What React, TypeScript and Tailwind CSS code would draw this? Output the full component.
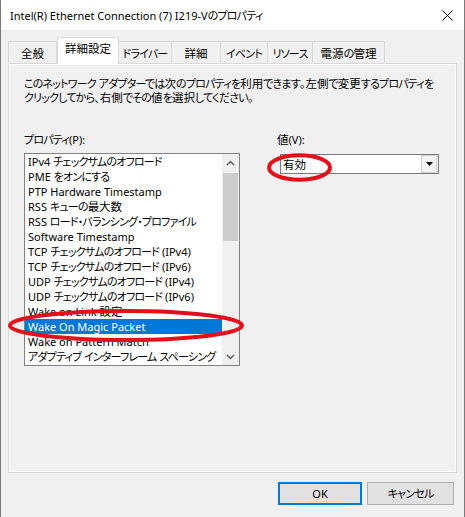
import React from "react";

function J({ t }: { t: string }) {
  const parts = t.split(/([\u3040-\u30ff]+|[\u4e00-\u9fff]+)/).filter((p) => p !== "");
  return (
    <>
      {parts.map((p, i) =>
        /[\u3040-\u30ff]/.test(p) ? (
          <span key={i} className="tracking-[-0.8px]">
            {p}
          </span>
        ) : /[\u4e00-\u9fff]/.test(p) ? (
          <span key={i} className="text-[11.5px]">
            {p}
          </span>
        ) : (
          <React.Fragment key={i}>{p}</React.Fragment>
        )
      )}
    </>
  );
}

const items = [
  "IPv4 チェックサムのオフロード",
  "PME をオンにする",
  "PTP Hardware Timestamp",
  "RSS キューの最大数",
  "RSS ロード・バランシング・プロファイル",
  "Software Timestamp",
  "TCP チェックサムのオフロード (IPv4)",
  "TCP チェックサムのオフロード (IPv6)",
  "UDP チェックサムのオフロード (IPv4)",
  "UDP チェックサムのオフロード (IPv6)",
  "Wake on Link 設定",
  "Wake On Magic Packet",
  "Wake on Pattern Match",
  "アダプティブ インターフレーム スペーシング",
];

const tabs = [
  { label: "全般", w: "w-[49px]" },
  { label: "詳細設定", w: "w-[62px]", active: true },
  { label: "ドライバー", w: "w-[53px]" },
  { label: "詳細", w: "w-[49px]" },
  { label: "イベント", w: "w-[47px]" },
  { label: "リソース", w: "w-[45px]" },
  { label: "電源の管理", w: "w-[72px]" },
];

export default function App() {
  return (
    <div className="relative w-[465px] h-[517px] bg-[#f0f0f0] border-x border-[#7a7a7a] text-black text-[11px] leading-[15px] font-['Noto_Sans','Noto_Sans_CJK_JP',sans-serif] [font-feature-settings:'palt'] overflow-hidden">
      {/* Title bar */}
      <div className="h-[30px] bg-white flex items-center justify-between pl-[9px] pr-[10px]">
        <span className="whitespace-nowrap">
          <J t="Intel(R) Ethernet Connection (7) I219-Vのプロパティ" />
        </span>
        <svg width="11" height="11" viewBox="0 0 11 11" className="mr-[1px]">
          <path d="M0.5 0.5 L10.5 10.5 M10.5 0.5 L0.5 10.5" stroke="#000" strokeWidth="1" fill="none" />
        </svg>
      </div>

      <div className="px-[7px] pt-[7px]">
        {/* Tabs */}
        <div className="flex items-end h-[26px] relative z-10">
          {tabs.map((t, i) =>
            t.active ? (
              <div
                key={i}
                className={`${t.w} h-[27px] -mb-px bg-white border-x border-t border-[#d9d9d9] flex items-start justify-center pt-[3px] whitespace-nowrap`}
              >
                <J t={t.label} />
              </div>
            ) : (
              <div
                key={i}
                className={`${t.w} h-[22px] bg-[#f0f0f0] border-t border-r border-[#d9d9d9] ${i === 0 ? "border-l" : ""} flex items-center justify-center pt-[1px] whitespace-nowrap`}
              >
                <J t={t.label} />
              </div>
            )
          )}
        </div>

        {/* Panel */}
        <div className="h-[410px] border border-[#d9d9d9] bg-[#f0f0f0] shadow-[inset_1px_1px_0_#ffffff,inset_-1px_-1px_0_#ffffff] pl-[15px] pt-[13px]">
          <p className="whitespace-nowrap leading-[14px]">
            <J t="このネットワーク アダプターでは次のプロパティを利用できます。左側で変更するプロパティを" />
            <br />
            <J t="クリックしてから、右側でその値を選択してください。" />
          </p>

          <div className="flex mt-[27px]">
            {/* Left column */}
            <div className="w-[216px]">
              <div>
                <J t="プロパティ(P):" />
              </div>
              <div className="mt-[6px] h-[213px] border border-[#828282] bg-white flex">
                <div className="flex-1 min-w-0 overflow-hidden flex flex-col">
                  {items.map((it, i) => (
                    <div
                      key={i}
                      className={`h-[15px] pl-[3px] whitespace-nowrap overflow-hidden ${i === 11 ? "bg-[#0078d7] text-white" : ""}`}
                    >
                      <J t={it} />
                    </div>
                  ))}
                </div>
                <div className="w-[17px] bg-[#f0f0f0] flex flex-col">
                  <div className="h-[17px] flex items-center justify-center">
                    <svg width="9" height="6" viewBox="0 0 9 6">
                      <path d="M1 5 L4.5 1.5 L8 5" stroke="#606060" strokeWidth="1.5" fill="none" />
                    </svg>
                  </div>
                  <div className="flex-1 px-[1px] pt-[2px]">
                    <div className="h-[68px] bg-[#cdcdcd]" />
                  </div>
                  <div className="h-[17px] flex items-center justify-center">
                    <svg width="9" height="6" viewBox="0 0 9 6">
                      <path d="M1 1 L4.5 4.5 L8 1" stroke="#606060" strokeWidth="1.5" fill="none" />
                    </svg>
                  </div>
                </div>
              </div>
            </div>

            {/* Right column */}
            <div className="ml-[37px] w-[162px]">
              <div>
                <J t="値(V):" />
              </div>
              <div className="mt-[7px] ml-[3px] h-[20px] w-[159px] border border-[#7a7a7a] bg-white flex items-center">
                <span className="flex-1 pl-[2px]">
                  <J t="有効" />
                </span>
                <div className="w-[16px] h-[18px] mr-[1px] bg-[#f4f4f4] border border-[#d0d0d0] flex items-center justify-center">
                  <svg width="7" height="4" viewBox="0 0 7 4">
                    <path d="M0 0 L7 0 L3.5 4 Z" fill="#000" />
                  </svg>
                </div>
              </div>
            </div>
          </div>
        </div>

        {/* Buttons */}
        <div className="flex justify-end gap-[5px] mt-[9px] pr-[3px]">
          <button className="w-[84px] h-[23px] bg-[#e1e1e1] border-2 border-[#0078d7] flex items-center justify-center">
            OK
          </button>
          <button className="w-[87px] h-[23px] bg-[#e1e1e1] border border-[#adadad] flex items-center justify-center">
            <J t="キャンセル" />
          </button>
        </div>
      </div>

      {/* Red annotation ellipses */}
      <svg className="absolute left-0 top-0 pointer-events-none" width="465" height="517">
        <ellipse cx="298.5" cy="167.5" rx="30.5" ry="12.3" fill="none" stroke="#e3101b" strokeWidth="4" />
        <ellipse cx="125" cy="325.5" rx="116" ry="14.5" fill="none" stroke="#e3101b" strokeWidth="4" />
      </svg>
    </div>
  );
}
